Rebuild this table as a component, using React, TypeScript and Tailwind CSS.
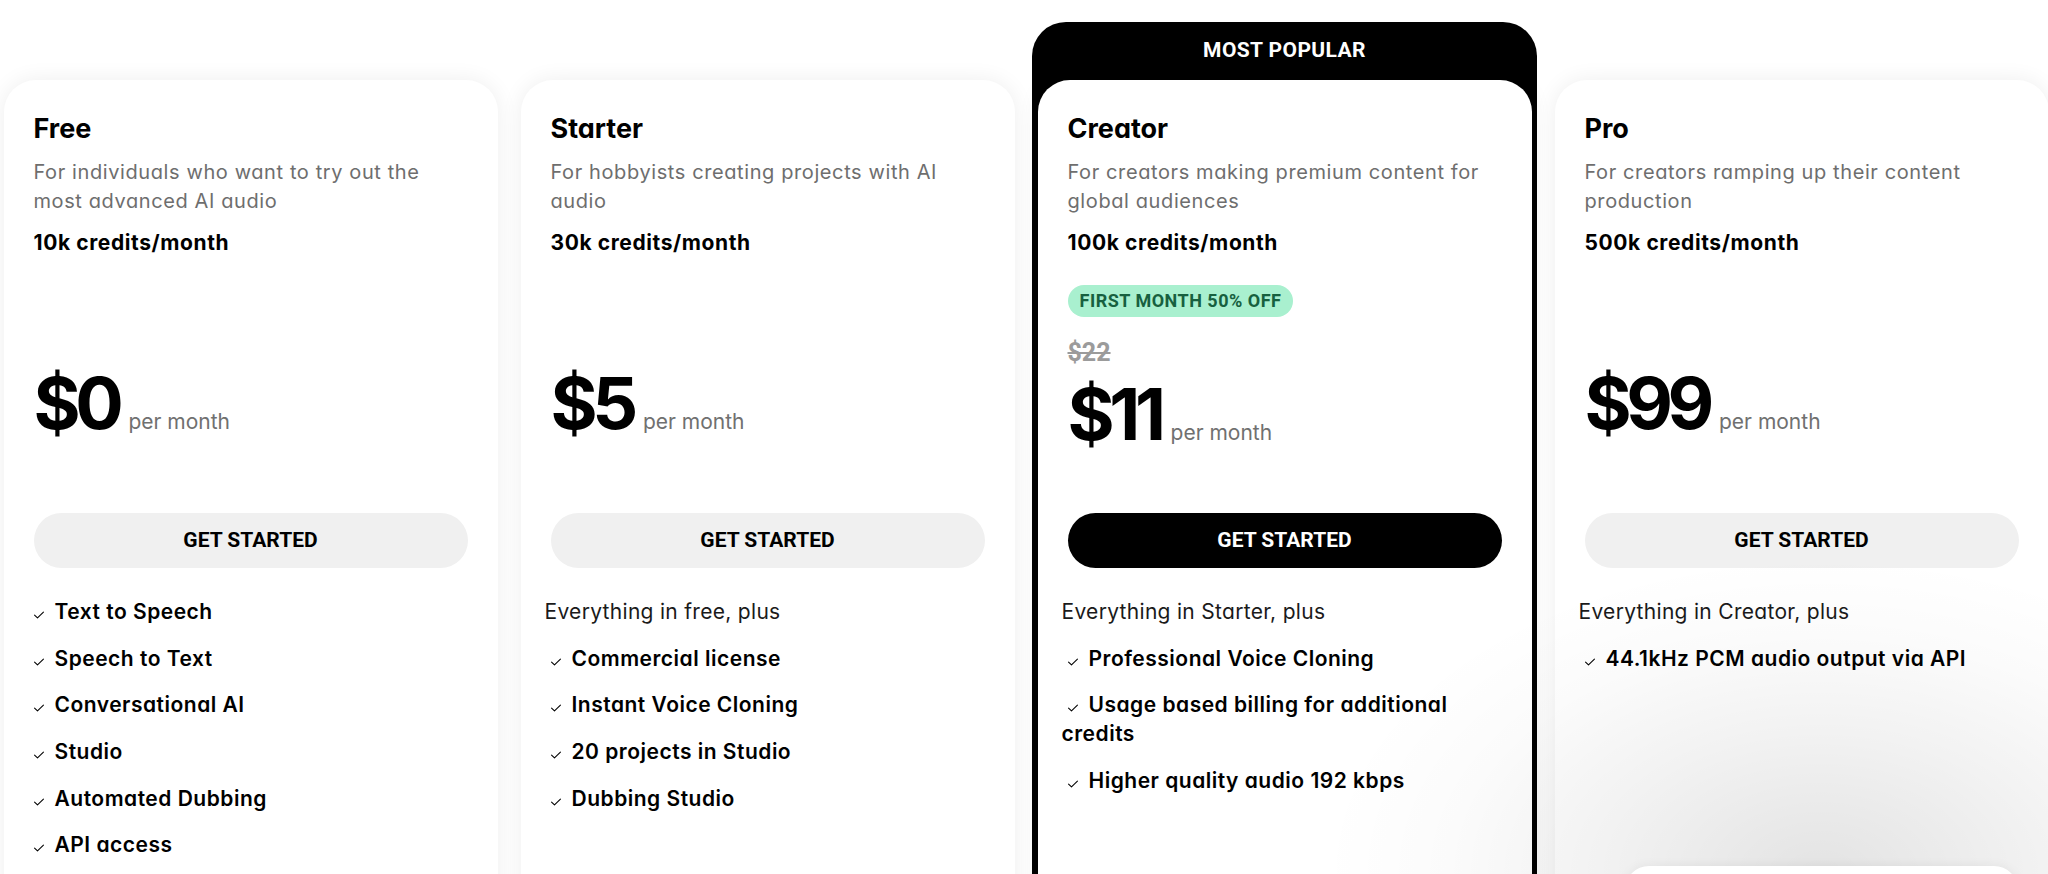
import React from "react";

type Plan = {
  name: string;
  desc: string;
  credits: string;
  price: string;
  oldPrice?: string;
  badge?: string;
  intro?: string;
  features: string[];
  popular?: boolean;
};

const plans: Plan[] = [
  {
    name: "Free",
    desc: "For individuals who want to try out the most advanced AI audio",
    credits: "10k credits/month",
    price: "$0",
    features: ["Text to Speech", "Speech to Text", "Conversational AI", "Studio", "Automated Dubbing", "API access"],
  },
  {
    name: "Starter",
    desc: "For hobbyists creating projects with AI audio",
    credits: "30k credits/month",
    price: "$5",
    intro: "Everything in free, plus",
    features: ["Commercial license", "Instant Voice Cloning", "20 projects in Studio", "Dubbing Studio"],
  },
  {
    name: "Creator",
    desc: "For creators making premium content for global audiences",
    credits: "100k credits/month",
    price: "$11",
    oldPrice: "$22",
    badge: "FIRST MONTH 50% OFF",
    intro: "Everything in Starter, plus",
    features: ["Professional Voice Cloning", "Usage based billing for additional credits", "Higher quality audio 192 kbps"],
    popular: true,
  },
  {
    name: "Pro",
    desc: "For creators ramping up their content production",
    credits: "500k credits/month",
    price: "$99",
    intro: "Everything in Creator, plus",
    features: ["44.1kHz PCM audio output via API"],
  },
];

function Check() {
  return (
    <svg viewBox="0 0 12 9" className="ml-[5px] mr-[10px] inline-block h-[8px] w-[12px] align-baseline" fill="none">
      <path d="M1 4.6 L4.3 7.8 L11 1.2" stroke="#000" strokeWidth="1.2" strokeLinecap="round" strokeLinejoin="round" />
    </svg>
  );
}

function Price({ value }: { value: string }) {
  return (
    <div className="flex items-baseline gap-[10px]">
      <span className="text-[72px] font-bold leading-[72px] tracking-[-0.075em] text-black">{value}</span>
      <span className="text-[21px] text-[#707070]">per month</span>
    </div>
  );
}

function PlanCard({ plan }: { plan: Plan }) {
  return (
    <div
      className={
        plan.popular
          ? "flex w-[505px] shrink-0 flex-col items-center rounded-[34px] bg-black"
          : "flex w-[505px] shrink-0 flex-col items-center"
      }
    >
      {/* cabeçalho preto só aparece no plano em destaque */}
      <div className="flex h-[58px] w-full items-center justify-center">
        {plan.popular && (
          <span className="font-['Roboto',sans-serif] text-[21px] font-bold tracking-[0.4px] text-white">MOST POPULAR</span>
        )}
      </div>
      <div className="h-[860px] w-[494px] rounded-[32px] bg-white px-[30px] pt-[33px] shadow-[0_0_22px_rgba(0,0,0,0.07)]">
        <h3 className="text-[27px] font-bold leading-[32px] text-black">{plan.name}</h3>
        <p className="mt-[12.5px] max-w-[422px] text-[20px] leading-[29px] tracking-[0.6px] text-[#6e6e6e]">{plan.desc}</p>
        <p className="mt-[13px] text-[21px] font-bold leading-[28px] tracking-[0.6px] text-black">{plan.credits}</p>

        <div className="flex h-[256.5px] flex-col items-start">
          {plan.badge ? (
            <>
              <span className="mt-[28px] inline-flex h-[32px] items-center rounded-full bg-[#a9f0cf] px-[12px] font-['Roboto',sans-serif] text-[18px] font-bold tracking-[0.5px] text-[#17603f]">
                {plan.badge}
              </span>
              <span className="mt-[21px] font-['Roboto',sans-serif] text-[25px] font-bold leading-[30px] text-[#9b9b9b] line-through">
                {plan.oldPrice}
              </span>
              <div className="mt-[10px]">
                <Price value={plan.price} />
              </div>
            </>
          ) : (
            <div className="mt-[110px]">
              <Price value={plan.price} />
            </div>
          )}
        </div>

        <button
          className={
            plan.popular
              ? "flex h-[55px] w-full items-center justify-center rounded-full bg-black font-['Roboto',sans-serif] text-[21px] font-bold text-white"
              : "flex h-[55px] w-full items-center justify-center rounded-full bg-[#f0f0f0] font-['Roboto',sans-serif] text-[21px] font-bold text-black"
          }
        >
          GET STARTED
        </button>

        <div className="-mx-[6px] mt-[29px] flex flex-col gap-[17.7px]">
          {plan.intro && <p className="text-[21px] leading-[29px] tracking-[0.3px] text-[#1a1a1a]">{plan.intro}</p>}
          {plan.features.map((f) => (
            <p key={f} className="text-[21px] font-semibold leading-[29px] tracking-[0.5px] text-black">
              <Check />
              {f}
            </p>
          ))}
        </div>
      </div>
    </div>
  );
}

export default function App() {
  return (
    <div className="relative h-[874px] w-full overflow-hidden bg-white font-['Inter',sans-serif] [font-feature-settings:'cv11']">
      <div className="ml-[-2px] flex gap-[12px] pt-[22px]">
        {plans.map((p) => (
          <PlanCard key={p.name} plan={p} />
        ))}
      </div>

      {/* sombra difusa do widget no canto inferior direito */}
      <div className="pointer-events-none absolute left-[1300px] top-[520px] h-[354px] w-[748px] bg-[radial-gradient(ellipse_500px_320px_at_521px_354px,rgba(0,0,0,0.11),rgba(0,0,0,0.05)_45%,rgba(0,0,0,0.015)_75%,transparent_100%)]" />
      <div className="absolute left-[1625px] top-[866px] h-[120px] w-[393px] rounded-[24px] bg-white shadow-[0_0_12px_rgba(0,0,0,0.06)]" />
    </div>
  );
}
